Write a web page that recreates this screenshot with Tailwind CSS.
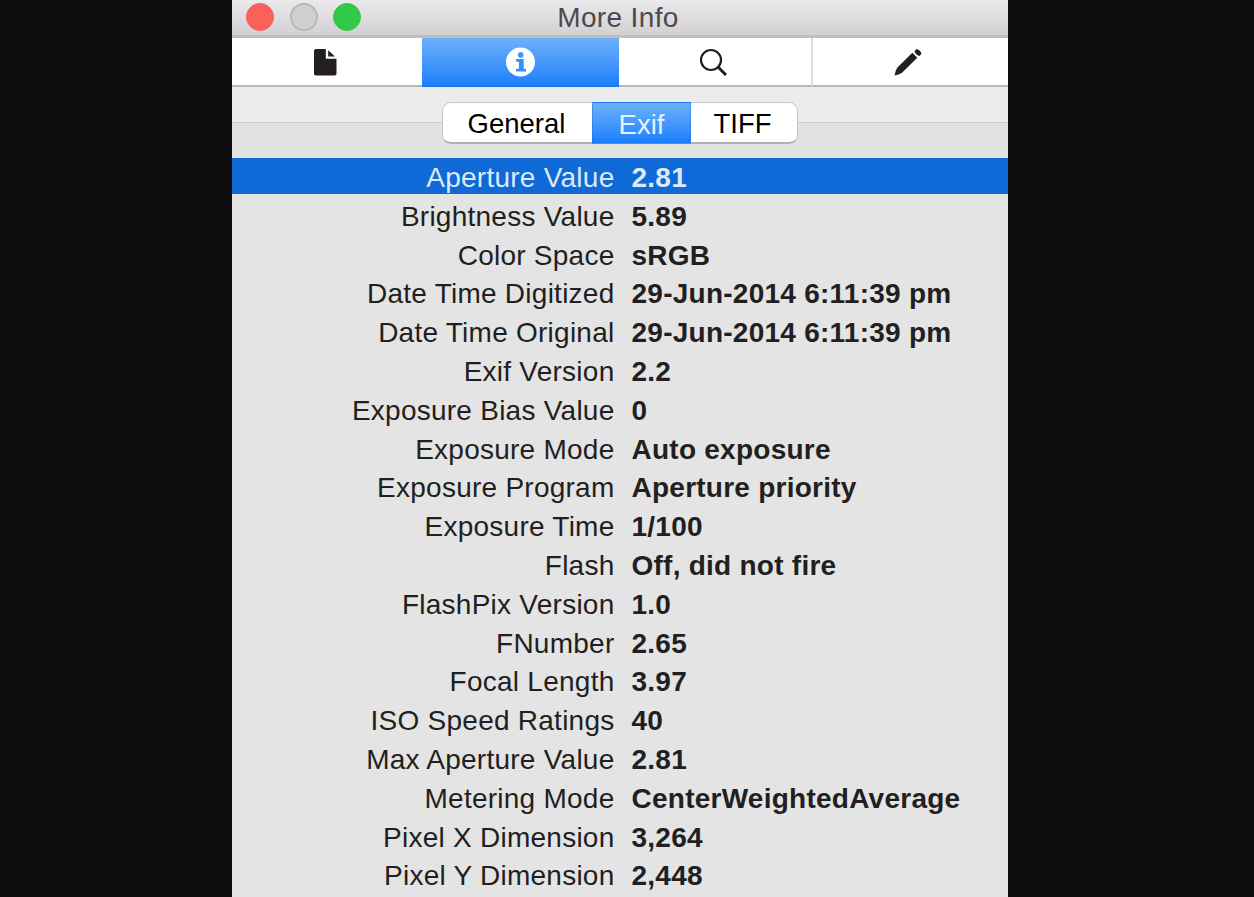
<!DOCTYPE html>
<html lang="en">

<head>
  <meta charset="UTF-8">
  <meta name="viewport" content="width=device-width, initial-scale=1">
  <title>More Info</title>
  <script src="https://cdn.jsdelivr.net/npm/@tailwindcss/browser@4"></script>
</head>

<body class="bg-[#0e0e0e] h-screen overflow-hidden flex justify-center pr-[14px] font-['Liberation_Sans',Arial,sans-serif] text-[28px]">

  <main class="w-[776px] h-screen bg-[#e4e4e4] flex flex-col overflow-hidden">

    <!-- Title bar -->
    <header class="h-[38px] shrink-0 grid grid-cols-3 items-start bg-linear-to-b from-[#ebe9eb] to-[#d3d0d3] border-b-3 border-[#bfbfbf] px-[14px]">
      <div class="flex gap-[15.5px] pt-[3px]">
        <span class="size-7 rounded-full bg-[#fc605b] border border-[#f0615c]"></span>
        <span class="size-7 rounded-full bg-[#d1d0d1] border-2 border-[#b9b8b9]"></span>
        <span class="size-7 rounded-full bg-[#30c948] border border-[#38c04c]"></span>
      </div>
      <h1 class="text-center leading-9 tracking-[0.35px] text-[#4b494b] pr-[4px] whitespace-nowrap">More Info</h1>
    </header>

    <!-- Inspector tabs -->
    <nav class="h-[49px] shrink-0 flex bg-white text-[#231f20]">
      <button class="w-[190px] flex items-center justify-center border-b-2 border-[#b5b8b8]">
        <svg class="w-6 h-7 relative left-[-2px]" viewBox="0 0 24 28" fill="currentColor">
          <path d="M3 1h9.800v9.800H23.500v14.700a2 2 0 0 1-2 2H3a2 2 0 0 1-2-2V3a2 2 0 0 1 2-2z" />
          <path d="M15.200 2.200 22 8.600h-6.800z" />
        </svg>
      </button>
      <button class="w-[197px] flex items-center justify-center bg-linear-to-b from-[#6bb1f9] to-[#167efc] border-b border-[#1670de]">
        <svg class="size-[30px]" viewBox="0 0 30 30">
          <circle cx="14.500" cy="15" r="14.500" fill="#fff" />
          <circle cx="14.700" cy="7.900" r="2.800" fill="#4699f9" />
          <path d="M10 11.900h7.700v9.800h2.300v2.900H10v-2.900h2.900v-6.900H10z" fill="#3890fb" />
        </svg>
      </button>
      <button class="w-[194px] flex items-center justify-center border-b-2 border-r-2 border-b-[#b5b8b8] border-r-[#dedede]">
        <svg class="size-7 relative left-[-2px]" viewBox="0 0 28 28" fill="none" stroke="currentColor">
          <circle cx="12" cy="12" r="10" stroke-width="2.200" />
          <path d="m19 19 8 8" stroke-width="3" />
        </svg>
      </button>
      <button class="flex-1 flex items-center justify-center border-b-2 border-[#b5b8b8]">
        <svg class="size-7 relative left-[-3px]" viewBox="0 0 28 28" fill="currentColor">
          <path d="M.5 27.500q.8-4.500 2.700-7.700L18.300 4.700 23.300 9.700 8 24.800q-3.300 1.900-7.500 2.700z" />
          <path d="m20.500 3.300 1.500-1.800c1.500-1.700 6.500 3 5.200 4.700l-1.800 1.700c-2.400-.5-4.300-2.200-4.900-4.600z" />
        </svg>
      </button>
    </nav>

    <!-- Section switch -->
    <div class="h-[71px] shrink-0 flex items-start justify-center pt-[15px] bg-[linear-gradient(#ececec_0_35px,#d0d0d0_35px_36px,#e2e2e2_36px)] text-[27.5px]">
      <div class="h-[42px] w-[356px] flex rounded-[9px] border border-[#c6c6c6] border-b-2 border-b-[#b0b0b0] bg-white text-black leading-9">
        <button class="w-[149px] pt-[3px] pr-[2px]">General</button>
        <button class="w-[99px] pt-[3px] -mt-px -mb-[2px] bg-linear-to-b from-[#6bb1f9] to-[#167efc] text-[#e6f1fe] border border-[#1d74e3]/50">Exif</button>
        <button class="flex-1 pt-[3px] pr-[3px]">TIFF</button>
      </div>
    </div>

    <dl id="exif" class="flex flex-col gap-[2.8px] tracking-[0.25px] text-[#231f20]"></dl>
  </main>

  <script>
    const exif = [
      ['Aperture Value', '2.81'],
      ['Brightness Value', '5.89'],
      ['Color Space', 'sRGB'],
      ['Date Time Digitized', '29-Jun-2014 6:11:39 pm'],
      ['Date Time Original', '29-Jun-2014 6:11:39 pm'],
      ['Exif Version', '2.2'],
      ['Exposure Bias Value', '0'],
      ['Exposure Mode', 'Auto exposure'],
      ['Exposure Program', 'Aperture priority'],
      ['Exposure Time', '1/100'],
      ['Flash', 'Off, did not fire'],
      ['FlashPix Version', '1.0'],
      ['FNumber', '2.65'],
      ['Focal Length', '3.97'],
      ['ISO Speed Ratings', '40'],
      ['Max Aperture Value', '2.81'],
      ['Metering Mode', 'CenterWeightedAverage'],
      ['Pixel X Dimension', '3,264'],
      ['Pixel Y Dimension', '2,448']
    ];
    const selected = 0;

    document.getElementById('exif').innerHTML = exif.map(([name, value], i) => `
      <div class="h-9 shrink-0 flex gap-[17px] leading-[40px] whitespace-nowrap ${i === selected ? 'bg-[#0f6ad7] text-[#dce9fa]' : ''}">
        <dt class="w-[382.500px] text-right">${name}</dt>
        <dd class="font-bold">${value}</dd>
      </div>
    `).join('');
  </script>

</body>

</html>
